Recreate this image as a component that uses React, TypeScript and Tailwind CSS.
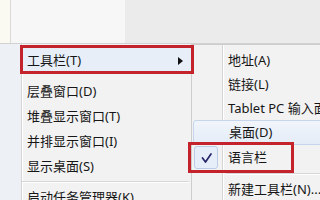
import React from "react";

function Arrow() {
  return (
    <svg width="5" height="8" viewBox="0 0 5 8" className="block">
      <path d="M0 0 L5 4 L0 8 Z" fill="#111" />
    </svg>
  );
}

function Check() {
  return (
    <svg width="11" height="10" viewBox="0 0 11 10" className="block">
      <path d="M1.5 5 L4.5 9 L10 1" fill="none" stroke="#26276b" strokeWidth="1.7" strokeLinejoin="round" strokeLinecap="round" />
    </svg>
  );
}

function Row1({ label, h = "h-[25px]" }: { label: string; h?: string }) {
  return (
    <div className={`${h} flex items-center pl-[7px] whitespace-nowrap`}>{label}</div>
  );
}

function Row2({ label, h = "h-[24px]" }: { label: string; h?: string }) {
  return (
    <div className={`${h} flex items-center whitespace-nowrap`}>
      <div className="w-[30px] shrink-0" />
      <div className="pl-[6px]">{label}</div>
    </div>
  );
}

export default function App() {
  return (
    <div className="relative w-[320px] h-[200px] overflow-hidden bg-[#f1f1f1] text-[13px] leading-none text-[#161616] font-['Noto_Sans','Noto_Sans_CJK_SC',sans-serif]">
      <div className="flex h-[44px] border-b border-[#d2d2d2]">
        <div className="w-[11px] bg-[#fbfaf2] border-r border-[#d9d9d9]" />
        <div className="w-[114px] bg-[#f7f7f7]" />
        <div className="flex-1 bg-[#ebebeb]" />
      </div>
      <div className="flex h-[156px]">
        <div className="w-[20px] bg-[#edf0f4]" />
        <div className="w-[172px] shrink-0 border-r border-[#cdcdcd] bg-[linear-gradient(to_right,#eceef1_1px,#d5d5d5_1px,#d5d5d5_2px,#ffffff_2px,#ffffff_3px,#f2f2f2_3px)] pt-[3px]">
          <div className="h-[27px] flex items-center justify-between pl-[7px] pr-[8px] bg-[#e7eef8] whitespace-nowrap">
            <span>工具栏(T)</span>
            <Arrow />
          </div>
          <div className="h-[5px]" />
          <Row1 label="层叠窗口(D)" />
          <Row1 label="堆叠显示窗口(T)" />
          <Row1 label="并排显示窗口(I)" />
          <Row1 label="显示桌面(S)" />
          <div className="h-[6px] flex flex-col justify-center pl-[2px] pr-[2px]">
            <div className="h-px bg-[#d6d6d6]" />
            <div className="h-px bg-white" />
          </div>
          <Row1 label="启动任务管理器(K)" />
        </div>
        <div className="flex-1 min-w-0 border-t border-[#cdcdcd] bg-[linear-gradient(to_right,#f2f2f2_30px,#d5d5d5_30px,#d5d5d5_31px,#ffffff_31px,#ffffff_32px,#f2f2f2_32px)] pt-[3px]">
          <Row2 label="地址(A)" />
          <Row2 label="链接(L)" />
          <Row2 label="Tablet PC 输入面板" />
          <div className="h-[25px] flex items-center whitespace-nowrap ml-[1px] mr-[-6px] rounded-[3px] border border-[#c5d5ec] bg-[linear-gradient(to_bottom,#f1f5fb,#e4ecf7)]">
            <div className="w-[29px] shrink-0" />
            <div className="pl-[6px]">桌面(D)</div>
          </div>
          <div className="h-[25px] flex items-center whitespace-nowrap">
            <div className="w-[30px] shrink-0 flex items-center pl-[2px]">
              <div className="w-[24px] h-[23px] rounded-[3px] border border-[#b9cde9] bg-[#e6eef9] flex items-center justify-center">
                <Check />
              </div>
            </div>
            <div className="pl-[6px]">语言栏</div>
          </div>
          <div className="h-[7px] flex flex-col justify-center pl-[34px]">
            <div className="h-px bg-[#d6d6d6]" />
            <div className="h-px bg-white" />
          </div>
          <Row2 label="新建工具栏(N)..." />
        </div>
      </div>
      <div className="absolute left-[20px] top-[45px] w-[174px] h-[29px] border-[3px] border-[#c5232b]" />
      <div className="absolute left-[188px] top-[142px] w-[106px] h-[31px] border-[3px] border-[#c5232b]" />
    </div>
  );
}
